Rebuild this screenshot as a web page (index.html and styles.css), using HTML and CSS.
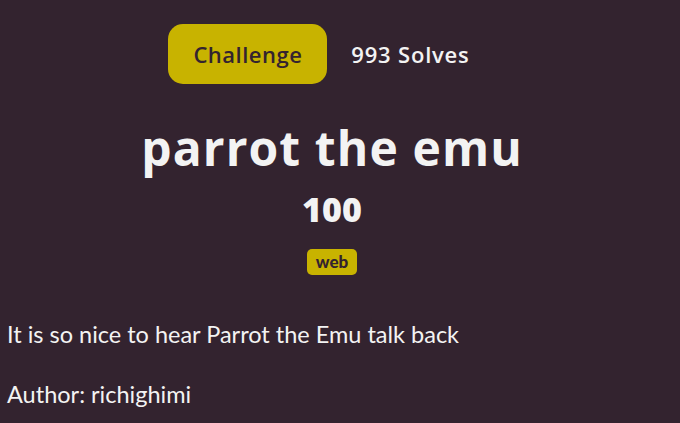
FILE: index.html
```html
<!DOCTYPE html>
<html>
<head>
<meta charset="utf-8">
<link rel="stylesheet" href="styles.css">
</head>
<body>
<div class="modal">
  <div class="tabs">
    <span class="tab active">Challenge</span>
    <span class="tab">993 Solves</span>
  </div>
  <h1 class="title">parrot the emu</h1>
  <div class="points">100</div>
  <div class="tags"><span class="tag">web</span></div>
  <div class="desc">
    <p>It is so nice to hear Parrot the Emu talk back</p>
    <p>Author: richighimi</p>
  </div>
</div>
</body>
</html>
```
FILE: styles.css
```css
html, body {
  margin: 0;
  padding: 0;
  background: #33232f;
  color: #f3f3f3;
}
.modal {
  padding: 24px 23px 0 7px;
  font-family: "Lato", sans-serif;
}
.tabs {
  display: flex;
  justify-content: center;
  align-items: center;
  gap: 24px;
  padding-right: 26px;
}
.tab {
  font-family: "Open Sans", sans-serif;
  font-weight: 600;
  font-size: 22px;
  letter-spacing: 0.8px;
  color: #f3f3f3;
  height: 60px;
  display: flex;
  align-items: center;
}
.tab.active {
  background: #c8b300;
  color: #33232f;
  border-radius: 15px;
  padding: 0 25px 0 25px;
  letter-spacing: 0.5px;
  font-weight: 600;
}
.title {
  margin: 36px 0 0;
  text-align: center;
  font-family: "Open Sans", sans-serif;
  font-weight: 700;
  font-size: 48px;
  letter-spacing: 1.1px;
  line-height: 56px;
}
.points {
  text-align: center;
  font-family: "Open Sans", sans-serif;
  font-weight: 800;
  font-size: 34px;
  line-height: 40px;
  margin-top: 13px;
}
.tags {
  display: flex;
  justify-content: center;
  margin-top: 20px;
}
.tag {
  background: #c8b300;
  color: #33232f;
  font-family: "Lato", sans-serif;
  font-weight: 900;
  font-size: 17px;
  border-radius: 5px;
  padding: 3px 9px 3px;
  line-height: 20px;
}
.desc {
  margin-top: 42px;
}
.desc p {
  margin: 0 0 25px;
  font-size: 23.5px;
  line-height: 35px;
}
```
